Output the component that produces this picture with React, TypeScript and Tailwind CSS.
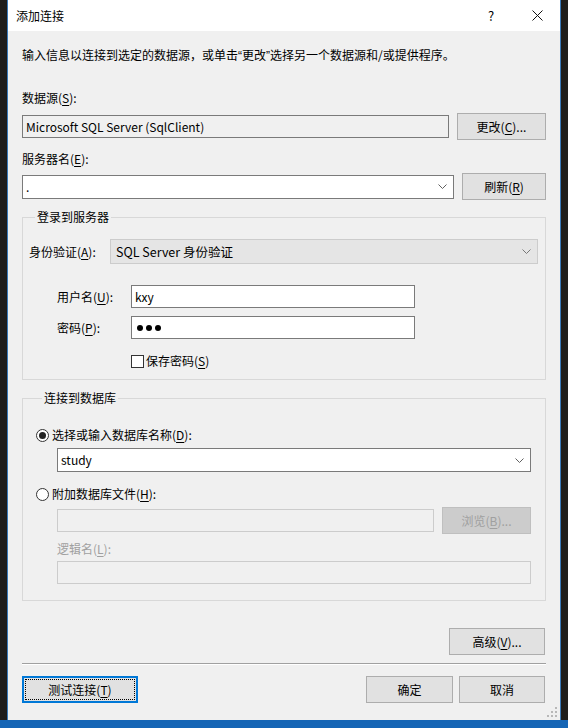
import type { ReactNode } from 'react'

const font = { fontFamily: '"Noto Sans CJK SC", "Noto Sans", sans-serif' }

function U({ children }: { children: ReactNode }) {
  return <span className="underline underline-offset-[2px]">{children}</span>
}

function Q({ children }: { children: ReactNode }) {
  // narrow latin quote marks, as in the original dialog
  return <span style={{ fontFamily: '"Liberation Sans", sans-serif' }}>{children}</span>
}

function Chevron({ color = '#606060' }: { color?: string }) {
  return (
    <svg width="9" height="5" viewBox="0 0 9 5" className="shrink-0">
      <polyline points="0.5,0.5 4.5,4.5 8.5,0.5" fill="none" stroke={color} strokeWidth="1" />
    </svg>
  )
}

function Button({ children, className = '' }: { children: ReactNode; className?: string }) {
  return (
    <div className={`h-[27px] flex items-center justify-center bg-[#e1e1e1] border border-[#adadad] text-black ${className}`}>
      {children}
    </div>
  )
}

function TextBox({ value, className = '' }: { value?: ReactNode; className?: string }) {
  return (
    <div className={`h-[23px] flex items-center px-[3px] bg-white border border-[#7a7a7a] ${className}`}>
      {value}
    </div>
  )
}

function Combo({ value, className = '' }: { value: string; className?: string }) {
  return (
    <div className={`h-[24px] flex items-center justify-between pl-[3px] pr-[6px] bg-white border border-[#7a7a7a] ${className}`}>
      <span>{value}</span>
      <Chevron />
    </div>
  )
}

function Radio({ checked }: { checked?: boolean }) {
  return (
    <div className="w-[13px] h-[13px] rounded-full border border-[#333333] bg-white flex items-center justify-center shrink-0">
      {checked && <div className="w-[7px] h-[7px] rounded-full bg-[#222222]" />}
    </div>
  )
}

export default function App() {
  return (
    <div className="w-[568px] h-[728px] flex flex-col bg-[#1e1e1e] text-[12px] leading-[16px] text-black overflow-hidden" style={font}>
      <div className="flex flex-1 min-h-0">
        <div className="w-[7px] bg-[#1f1d1b]" />
        <div className="relative flex-1 flex flex-col border-x border-[#3a79b8]">
          {/* title bar */}
          <div className="h-[31px] bg-white flex items-center shrink-0">
            <span className="pl-[8px]">添加连接</span>
            <div className="ml-auto w-[46px] h-full flex items-center justify-center text-[13px]">?</div>
            <div className="w-[46px] h-full flex items-center justify-center">
              <svg width="11" height="11" viewBox="0 0 11 11">
                <path d="M0.5 0.5L10.5 10.5M10.5 0.5L0.5 10.5" stroke="#111" strokeWidth="1" />
              </svg>
            </div>
          </div>

          {/* body */}
          <div className="flex-1 bg-[#f0f0f0] px-[14px] flex flex-col">
            <div className="mt-[16px]">
              输入信息以连接到选定的数据源，或单击<Q>“</Q>更改<Q>”</Q>选择另一个数据源和/或提供程序。
            </div>

            <div className="mt-[26px]">数据源(<U>S</U>):</div>
            <div className="mt-[7px] flex items-center">
              <div className="h-[23px] w-[427px] flex items-center px-[3px] bg-[#f0f0f0] border border-[#7a7a7a]">
                Microsoft SQL Server (SqlClient)
              </div>
              <Button className="ml-auto w-[89px]">更改(<U>C</U>)...</Button>
            </div>

            <div className="mt-[11px]">服务器名(<U>E</U>):</div>
            <div className="mt-[6px] flex items-center">
              <Combo value="." className="w-[432px]" />
              <Button className="ml-auto w-[84px]">刷新(<U>R</U>)</Button>
            </div>

            {/* login group */}
            <fieldset className="mt-[9px] border border-[#d8d8d8] pl-[6px] pr-[7px] pb-[10px]">
              <legend className="ml-[6px] px-[2px]">登录到服务器</legend>
              <div className="mt-[14px] flex items-center">
                <span className="w-[81px]">身份验证(<U>A</U>):</span>
                <div className="flex-1 h-[25px] flex items-center justify-between pl-[5px] pr-[6px] bg-[#e5e5e5] border border-[#cccccc]">
                  <span className="text-[12.5px]">SQL Server 身份验证</span>
                  <Chevron color="#777777" />
                </div>
              </div>
              <div className="mt-[21px] flex items-center">
                <span className="w-[74px] pl-[28px] box-content">用户名(<U>U</U>):</span>
                <TextBox value="kxy" className="w-[284px]" />
              </div>
              <div className="mt-[8px] flex items-center">
                <span className="w-[74px] pl-[28px] box-content">密码(<U>P</U>):</span>
                <TextBox
                  className="w-[284px] gap-[3px] pl-[5px]"
                  value={
                    <>
                      <span className="w-[6px] h-[6px] rounded-full bg-black" />
                      <span className="w-[6px] h-[6px] rounded-full bg-black" />
                      <span className="w-[6px] h-[6px] rounded-full bg-black" />
                    </>
                  }
                />
              </div>
              <div className="mt-[14px] flex items-center pl-[102px]">
                <div className="w-[13px] h-[13px] border border-[#333333] bg-white" />
                <span className="ml-[2px]">保存密码(<U>S</U>)</span>
              </div>
            </fieldset>

            {/* database group */}
            <fieldset className="mt-[10px] border border-[#d8d8d8] pl-[13px] pr-[14px] pb-[16px]">
              <legend className="ml-[6px] px-[2px]">连接到数据库</legend>
              <div className="mt-[21px] flex items-center">
                <Radio checked />
                <span className="ml-[3px]">选择或输入数据库名称(<U>D</U>):</span>
              </div>
              <div className="mt-[5px] pl-[21px]">
                <Combo value="study" className="h-[23px]" />
              </div>
              <div className="mt-[14px] flex items-center">
                <Radio />
                <span className="ml-[3px]">附加数据库文件(<U>H</U>):</span>
              </div>
              <div className="mt-[5px] pl-[21px] flex items-center">
                <div className="h-[23px] w-[377px] bg-[#f0f0f0] border border-[#cccccc]" />
                <div className="ml-auto w-[89px] h-[27px] flex items-center justify-center bg-[#cccccc] border border-[#bfbfbf] text-[#a0a0a0]">
                  浏览(<U>B</U>)...
                </div>
              </div>
              <div className="mt-[7px] pl-[21px] text-[#a0a0a0]">逻辑名(<U>L</U>):</div>
              <div className="mt-[4px] pl-[21px]">
                <div className="h-[23px] bg-[#f0f0f0] border border-[#cccccc]" />
              </div>
            </fieldset>

            <div className="mt-[27px] flex justify-end pr-[1px]">
              <Button className="w-[96px]">高级(<U>V</U>)...</Button>
            </div>

            <div className="mt-[8px] border-t border-[#a0a0a0] border-b border-b-white" />

            <div className="mt-[11px] flex items-center pr-[1px]">
              <div className="w-[116px] h-[27px] bg-[#e1e1e1] border-2 border-[#0078d7] p-[1px]">
                <div className="w-full h-full border border-dotted border-black flex items-center justify-center">
                  测试连接(<U>T</U>)
                </div>
              </div>
              <Button className="ml-auto w-[87px]">确定</Button>
              <Button className="ml-[6px] w-[86px]">取消</Button>
            </div>
          </div>

          {/* size grip */}
          <svg width="10" height="10" viewBox="0 0 10 10" className="absolute right-[3px] bottom-[3px]">
            <rect x="8" y="0" width="2" height="2" fill="#b8b8b8" />
            <rect x="4" y="4" width="2" height="2" fill="#b8b8b8" />
            <rect x="8" y="4" width="2" height="2" fill="#b8b8b8" />
            <rect x="0" y="8" width="2" height="2" fill="#b8b8b8" />
            <rect x="4" y="8" width="2" height="2" fill="#b8b8b8" />
            <rect x="8" y="8" width="2" height="2" fill="#b8b8b8" />
          </svg>
        </div>
        <div className="w-[7px] bg-[#1f1d1b]" />
      </div>
      <div className="h-[8px] bg-[#1565b5] shrink-0" />
    </div>
  )
}
